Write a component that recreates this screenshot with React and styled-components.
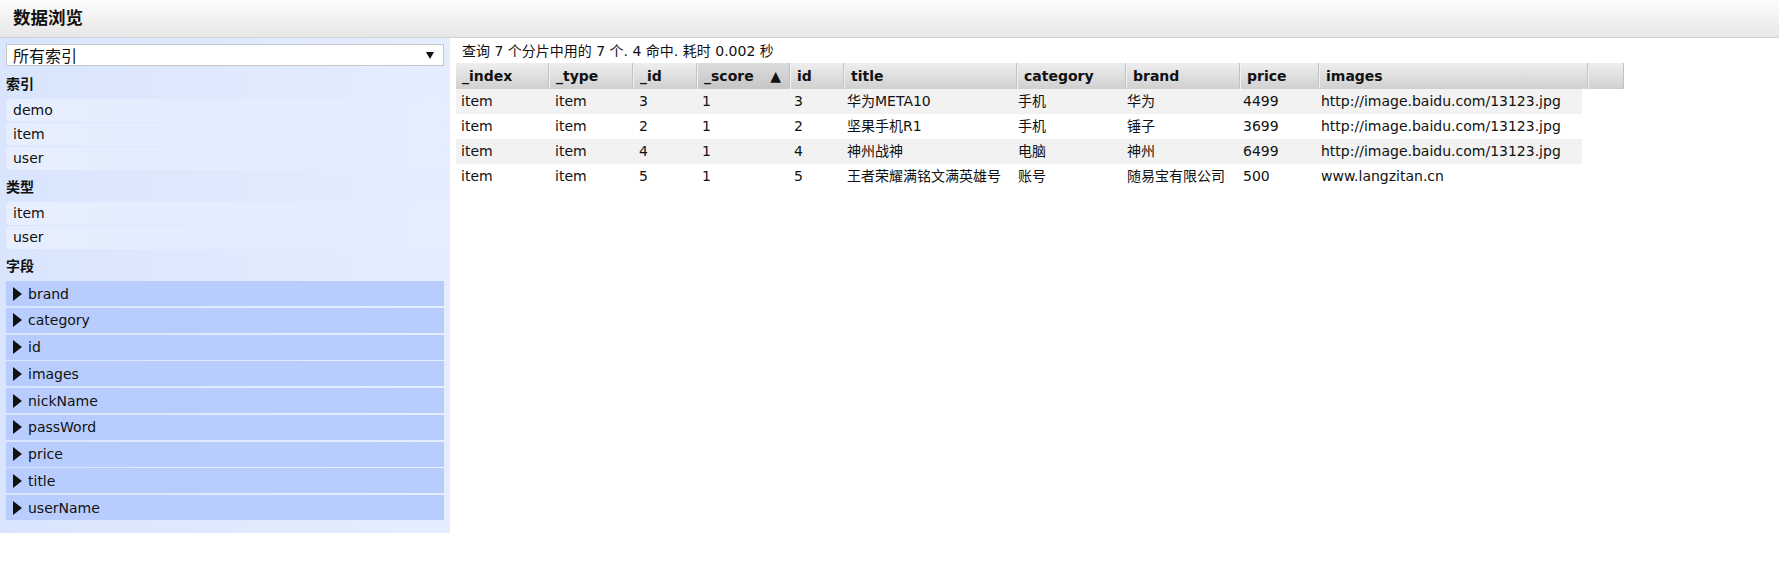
import React from 'react';
import styled, { createGlobalStyle } from 'styled-components';

const GlobalStyle = createGlobalStyle`
  html, body { margin: 0; padding: 0; background: #fff; }
  body {
    font-family: "DejaVu Sans", "Noto Sans CJK SC", sans-serif;
    font-size: 14px;
    color: #111;
  }
`;

const Page = styled.div`
  width: 1779px;
  display: flex;
  flex-direction: column;
`;

const TopBar = styled.header`
  height: 37px;
  box-sizing: content-box;
  border-bottom: 1px solid #d2d2d2;
  background: linear-gradient(to bottom, #fcfcfc, #e7e7e7);
  display: flex;
  align-items: center;
  padding-left: 13px;
`;

const Title = styled.h1`
  margin: 0 0 3px;
  font-family: "Noto Sans CJK SC", sans-serif;
  font-size: 17.5px;
  font-weight: bold;
  color: #111;
  line-height: 20px;
`;

const Main = styled.div`
  display: flex;
  align-items: flex-start;
`;

const Sidebar = styled.aside`
  width: 450px;
  box-sizing: border-box;
  padding: 6px 6px 13px;
  background: linear-gradient(to right, #d9e5fd, #e5eefe);
  display: flex;
  flex-direction: column;
`;

const Select = styled.div`
  height: 22px;
  box-sizing: border-box;
  border: 1px solid #c6c6c6;
  background: #fff;
  display: flex;
  align-items: center;
  padding: 1px 0 0 6px;
`;

const SelectText = styled.span`
  font-family: "Noto Sans CJK SC", sans-serif;
  font-size: 16px;
  line-height: 19px;
  color: #111;
`;

const SelectArrow = styled.span`
  margin-left: auto;
  margin-right: 9px;
  width: 0;
  height: 0;
  border-left: 4px solid transparent;
  border-right: 4px solid transparent;
  border-top: 7px solid #111;
`;

const SectionTitle = styled.div`
  font-weight: bold;
  font-size: 14px;
  line-height: 22px;
  margin: ${(p) => (p.$first ? '6px' : '5px')} 0 5px;
  font-family: "Noto Sans CJK SC", sans-serif;
`;

const List = styled.div`
  display: flex;
  flex-direction: column;
  gap: ${(p) => p.$gap || '1px'};
`;

const ListRow = styled.div`
  height: 23px;
  line-height: 23px;
  padding-left: 7px;
  border-radius: 5px;
  background: linear-gradient(to right, #e7effe, rgba(231, 239, 254, 0.35));
`;

const FieldRow = styled.div`
  height: 25px;
  background: #b8cdfd;
  display: flex;
  align-items: center;
  padding-left: 7px;
  gap: 6px;
`;

const Caret = styled.span`
  width: 0;
  height: 0;
  border-top: 7px solid transparent;
  border-bottom: 7px solid transparent;
  border-left: 9px solid #111;
`;

const Content = styled.section`
  flex: 1;
  padding: 3px 0 0 6px;
`;

const Summary = styled.div`
  line-height: 20px;
  margin-bottom: 2px;
  padding-left: 6px;
`;

const HeadRow = styled.div`
  display: flex;
  height: 26px;
`;

const HeadCell = styled.div`
  width: ${(p) => p.$w}px;
  box-sizing: border-box;
  height: 26px;
  line-height: 25px;
  padding-left: 6px;
  padding-right: 8px;
  font-weight: bold;
  white-space: nowrap;
  display: flex;
  justify-content: space-between;
  align-items: center;
  border-left: ${(p) => (p.$first ? 'none' : '1px solid #f3f3f3')};
  border-right: 1px solid #c2c2c2;
  background: ${(p) =>
    p.$sorted
      ? 'linear-gradient(to bottom, #dcdcdc, #c6c6c6)'
      : 'linear-gradient(to bottom, #eeeeee, #d0d0d0)'};
`;

const SortArrow = styled.span`
  font-size: 14px;
  line-height: 1;
`;

const BodyRow = styled.div`
  display: flex;
  height: 25px;
  background: ${(p) => (p.$odd ? '#f2f2f2' : '#fff')};
  width: 1126px;
`;

const BodyCell = styled.div`
  width: ${(p) => p.$w}px;
  box-sizing: border-box;
  padding-left: 5px;
  line-height: 25px;
  white-space: nowrap;
  overflow: hidden;
`;

const headCols = [
  { name: '_index', w: 93 },
  { name: '_type', w: 84 },
  { name: '_id', w: 64 },
  { name: '_score', w: 93, sorted: true },
  { name: 'id', w: 54 },
  { name: 'title', w: 173 },
  { name: 'category', w: 109 },
  { name: 'brand', w: 114 },
  { name: 'price', w: 79 },
  { name: 'images', w: 269 },
  { name: '', w: 36 },
];

const bodyWidths = [94, 84, 63, 92, 53, 171, 109, 116, 78, 266];

const rows = [
  ['item', 'item', '3', '1', '3', '华为META10', '手机', '华为', '4499', 'http://image.baidu.com/13123.jpg'],
  ['item', 'item', '2', '1', '2', '坚果手机R1', '手机', '锤子', '3699', 'http://image.baidu.com/13123.jpg'],
  ['item', 'item', '4', '1', '4', '神州战神', '电脑', '神州', '6499', 'http://image.baidu.com/13123.jpg'],
  ['item', 'item', '5', '1', '5', '王者荣耀满铭文满英雄号', '账号', '随易宝有限公司', '500', 'www.langzitan.cn'],
];

const indices = ['demo', 'item', 'user'];
const types = ['item', 'user'];
const fields = ['brand', 'category', 'id', 'images', 'nickName', 'passWord', 'price', 'title', 'userName'];

export default function App() {
  return (
    <Page>
      <GlobalStyle />
      <TopBar>
        <Title>数据浏览</Title>
      </TopBar>
      <Main>
        <Sidebar>
          <Select>
            <SelectText>所有索引</SelectText>
            <SelectArrow />
          </Select>
          <SectionTitle $first>索引</SectionTitle>
          <List>
            {indices.map((n) => (
              <ListRow key={n}>{n}</ListRow>
            ))}
          </List>
          <SectionTitle>类型</SectionTitle>
          <List>
            {types.map((n) => (
              <ListRow key={n}>{n}</ListRow>
            ))}
          </List>
          <SectionTitle>字段</SectionTitle>
          <List $gap="1.75px">
            {fields.map((f) => (
              <FieldRow key={f}>
                <Caret />
                {f}
              </FieldRow>
            ))}
          </List>
        </Sidebar>
        <Content>
          <Summary>查询 7 个分片中用的 7 个. 4 命中. 耗时 0.002 秒</Summary>
          <HeadRow>
            {headCols.map((c, i) => (
              <HeadCell key={i} $w={c.w} $first={i === 0} $sorted={c.sorted}>
                <span>{c.name}</span>
                {c.sorted && <SortArrow>▲</SortArrow>}
              </HeadCell>
            ))}
          </HeadRow>
          {rows.map((r, ri) => (
            <BodyRow key={ri} $odd={ri % 2 === 0}>
              {r.map((v, ci) => (
                <BodyCell key={ci} $w={bodyWidths[ci]}>
                  {v}
                </BodyCell>
              ))}
            </BodyRow>
          ))}
        </Content>
      </Main>
    </Page>
  );
}
